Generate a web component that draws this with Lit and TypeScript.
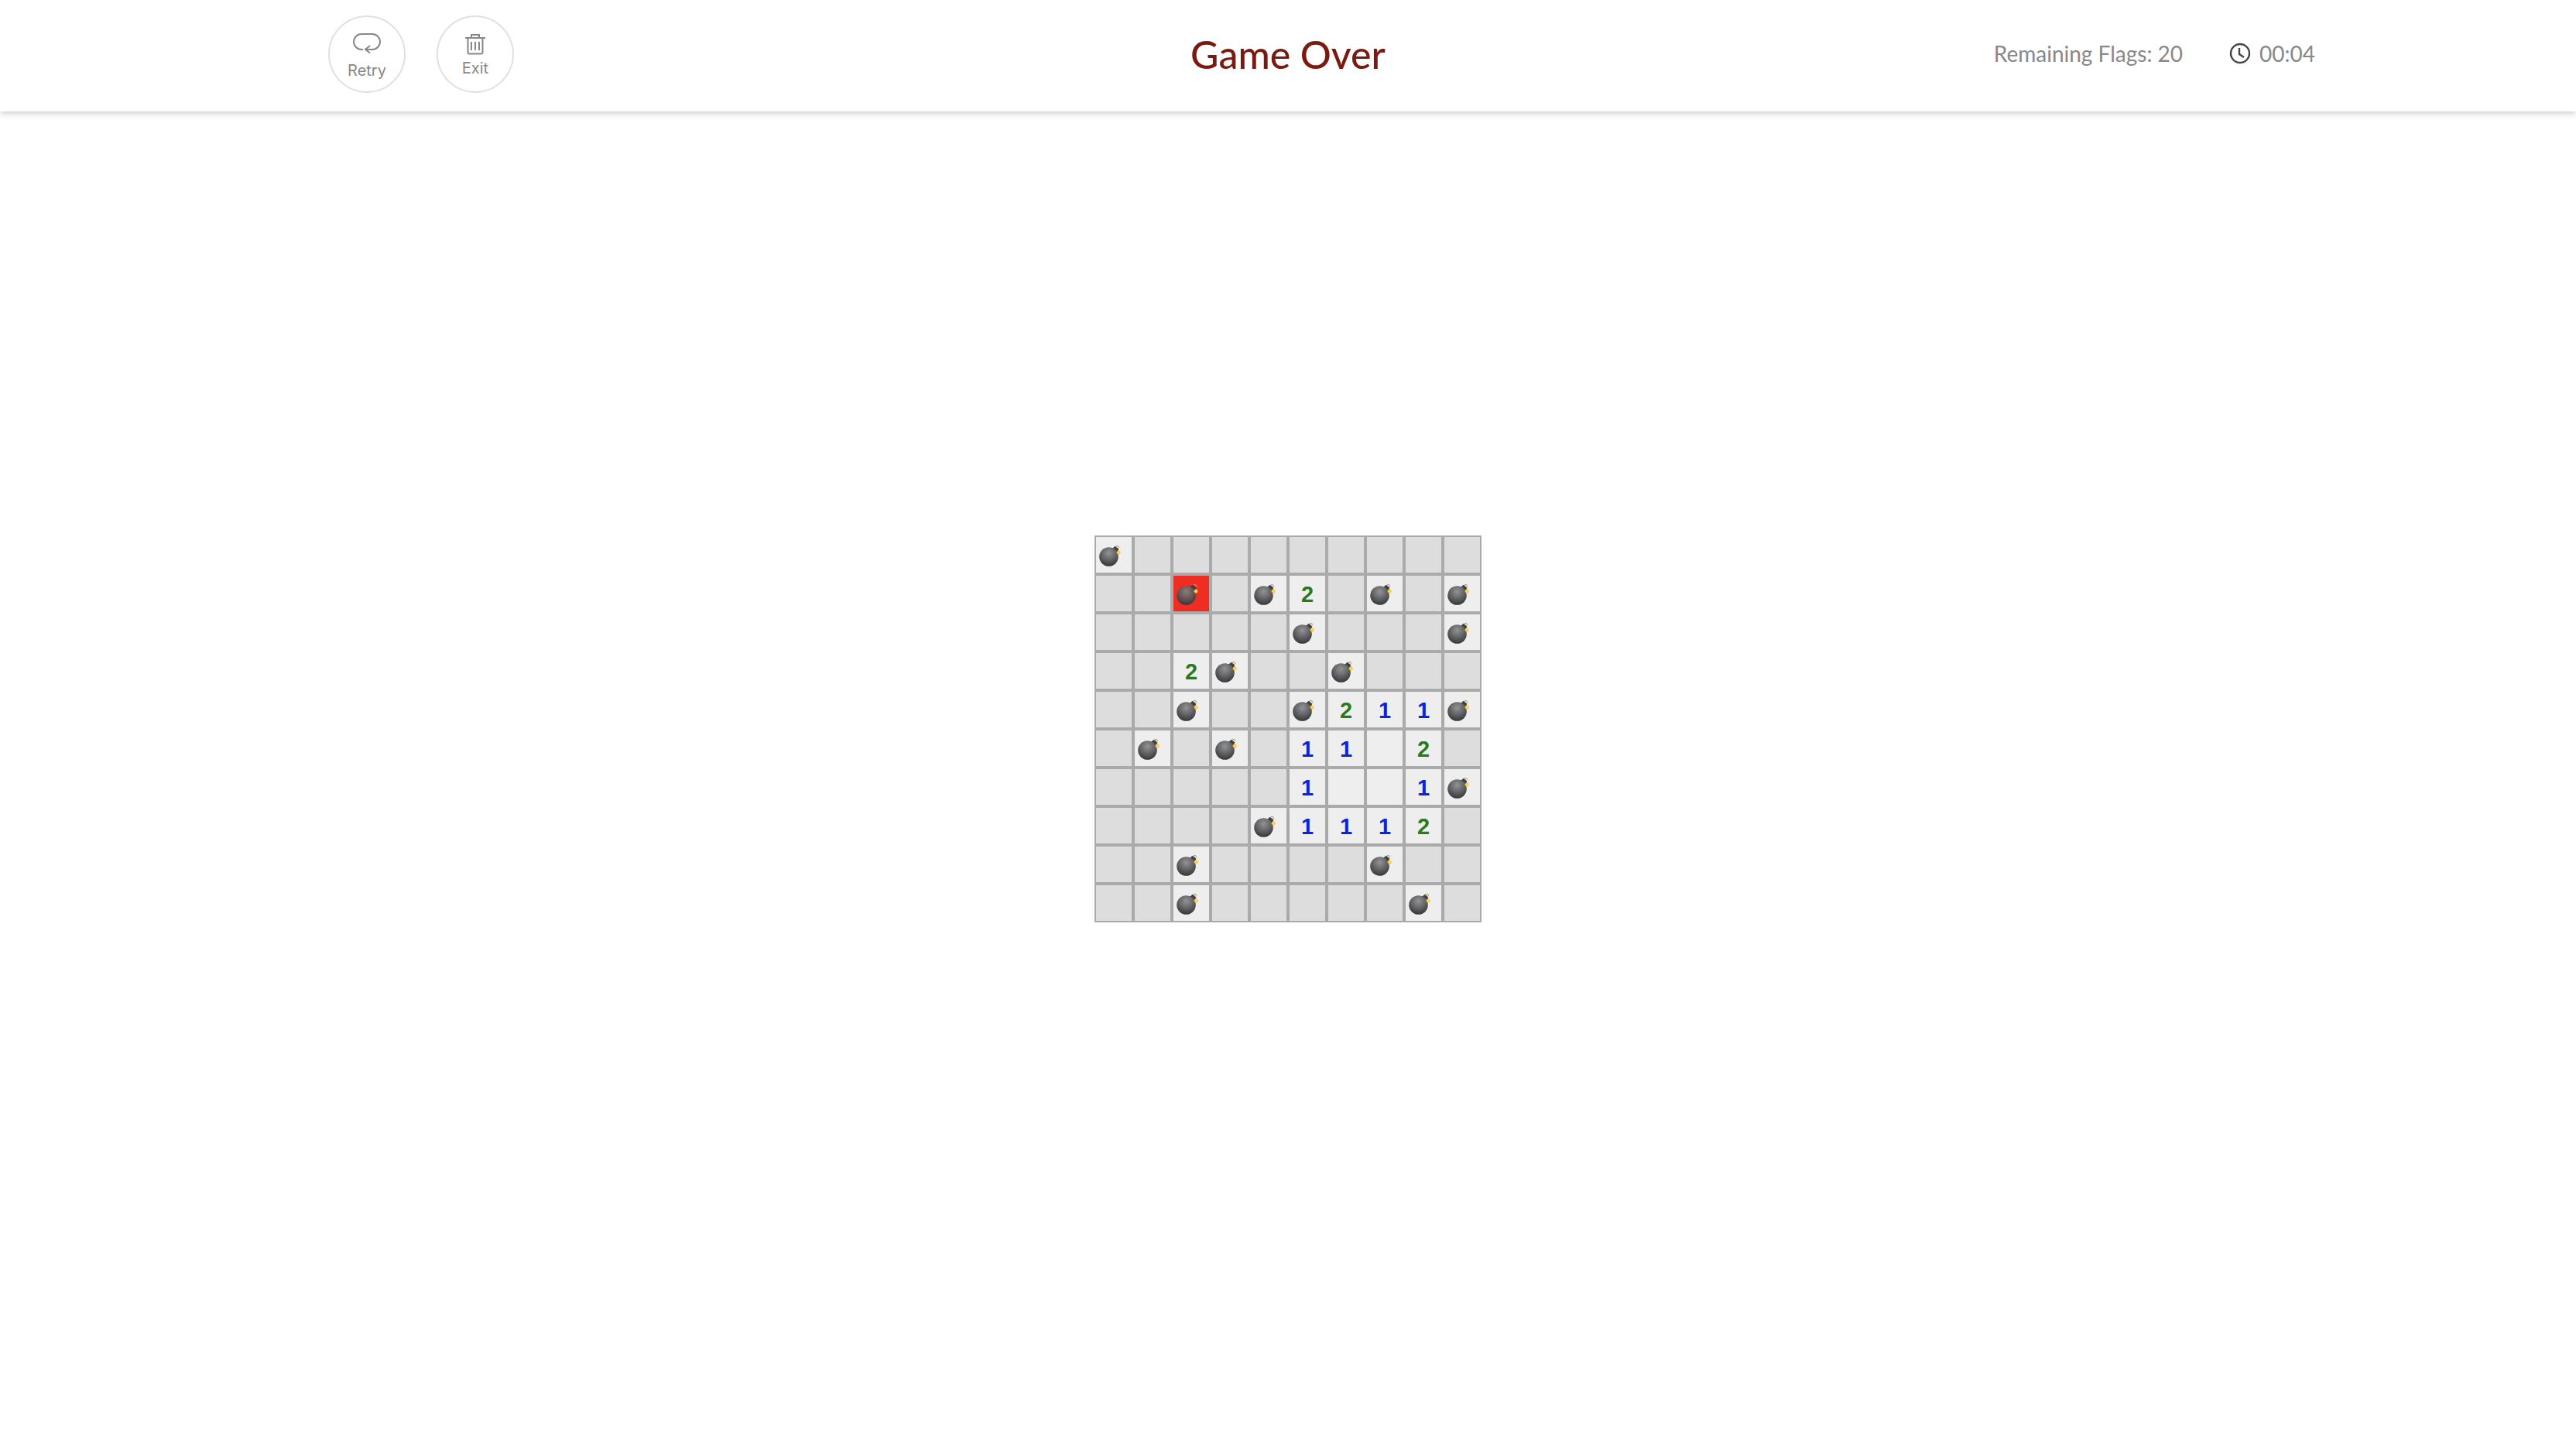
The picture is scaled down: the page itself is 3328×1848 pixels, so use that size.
import { LitElement, css, html, svg } from 'lit';
import { customElement } from 'lit/decorators.js';
import { classMap } from 'lit/directives/class-map.js';

// b = bomb, x = the bomb that went off, . = still covered, _ = opened and empty
const BOARD = [
  'b.........',
  '..x.b2.b.b',
  '.....b...b',
  '..2b..b...',
  '..b..b211b',
  '.b.b.11_2.',
  '.....1__1b',
  '....b1112.',
  '..b....b..',
  '..b.....b.',
];

const bomb = svg`
  <defs>
    <radialGradient id="body" cx="0.5" cy="0.3" r="0.74">
      <stop offset="0" stop-color="#939395" />
      <stop offset="0.5" stop-color="#636467" />
      <stop offset="1" stop-color="#323235" />
    </radialGradient>
    <radialGradient id="spark">
      <stop offset="0" stop-color="#fff07a" />
      <stop offset="0.55" stop-color="#fbc62e" />
      <stop offset="1" stop-color="#f9a01e" stop-opacity="0.15" />
    </radialGradient>
  </defs>
  <path d="M16.500 5.200l4.300-3.400 4.500 3.600-2.400 6.200z" fill="#3f4044" />
  <path d="M22 1.600c1.600-.5 3.200.5 3.800 2.400" fill="none" stroke="#c9a24a" stroke-width="1.200" />
  <circle cx="12.500" cy="15.500" r="12.300" fill="url(#body)" />
  <circle class="glow" cx="12.500" cy="15.500" r="12.300" />
  <circle cx="25" cy="10" r="3" fill="url(#spark)" />
`;

@customElement('mine-cell')
export class MineCell extends LitElement {
  static properties = { value: { type: String, reflect: true } };
  value = '.';

  static styles = css`
    :host {
      display: flex;
      box-sizing: border-box;
      width: 50px;
      height: 50px;
      border: 2px solid #aaa;
      background: #ddd;
      align-items: center;
      justify-content: center;
      font: 700 29px 'Liberation Sans', sans-serif;
      line-height: 1;
    }
    :host([value='b']), :host([value='_']), :host([value='1']), :host([value='2']) {
      background: #eee;
    }
    :host([value='x']) {
      background: #ee2e22;
    }
    .glow { fill: transparent; }
    :host([value='x']) .glow { fill: rgba(120, 40, 30, 0.22); }
    span { padding-top: 2px; }
    .one { color: #0a24dc; }
    .two { color: #2a7a1c; }
    svg {
      width: 28px;
      height: 28px;
      margin: 2px 11px 0 0;
      display: block;
    }
  `;

  render() {
    if (this.value === 'b' || this.value === 'x') {
      return html`<svg viewBox="0 0 28 28">${bomb}</svg>`;
    }
    if (this.value === '1' || this.value === '2') {
      return html`<span class=${classMap({ one: this.value === '1', two: this.value === '2' })}>${this.value}</span>`;
    }
    return html``;
  }
}

@customElement('app-root')
export class AppRoot extends LitElement {
  static styles = css`
    :host {
      display: block;
      width: 100%;
      min-height: 1848px;
      background: #fff;
    }
    header {
      display: grid;
      grid-template-columns: 1fr auto 1fr;
      align-items: center;
      height: 144px;
      box-sizing: border-box;
      padding-bottom: 4px;
      background: #fff;
      box-shadow: 0 2px 9px rgba(0, 0, 0, 0.22);
      font-family: Lato, sans-serif;
    }
    .actions {
      display: flex;
      gap: 40px;
      padding-left: 424px;
    }
    .round {
      display: flex;
      flex-direction: column;
      align-items: center;
      justify-content: center;
      box-sizing: border-box;
      width: 100px;
      height: 100px;
      border: 2px solid #e0e0e0;
      border-radius: 50%;
      background: #fff;
      padding: 3px 0 0;
      color: #888;
      font: 400 20px Inter, sans-serif;
    }
    .round svg {
      display: block;
      fill: none;
      stroke: #888;
      stroke-width: 2;
    }
    .retry svg { width: 36px; height: 28px; margin-bottom: 12px; }
    .exit { padding-bottom: 3px; }
    .exit svg { width: 28px; height: 28px; margin-bottom: 8px; }
    .round span { line-height: 19px; }
    h1 {
      margin: 0;
      font: 500 50px Lato, sans-serif;
      color: #7b1a10;
    }
    .status {
      display: flex;
      justify-content: flex-end;
      align-items: center;
      gap: 60px;
      padding: 0 337px 2px 0;
      color: #888;
      font-size: 28px;
    }
    .clock {
      display: flex;
      align-items: center;
      gap: 11px;
    }
    .clock svg {
      width: 28px;
      height: 28px;
      fill: none;
      stroke: #444;
      stroke-width: 2.400;
    }
    main {
      display: flex;
      justify-content: center;
      padding-top: 548px;
    }
    .board {
      display: grid;
      grid-template-columns: repeat(10, 50px);
    }
  `;

  render() {
    return html`
      <header>
        <div class="actions">
          <button class="round retry">
            <svg viewBox="0 0 36 28">
              <path d="M13 22h-2a10 10 0 0 1 0-20h14a10 10 0 0 1 0 20H16" />
              <path d="M22 17l-6 5 6 4.500" />
            </svg>
            <span>Retry</span>
          </button>
          <button class="round exit">
            <svg viewBox="0 0 28 28">
              <path d="M1 6h26M9 6V2h10v4M4.500 6v19a1.500 1.500 0 0 0 1.500 1.500h16a1.500 1.500 0 0 0 1.500-1.500V6M9 11v11M14 11v11M19 11v11" />
            </svg>
            <span>Exit</span>
          </button>
        </div>
        <h1>Game Over</h1>
        <div class="status">
          <span>Remaining Flags: 20</span>
          <span class="clock">
            <svg viewBox="0 0 28 28">
              <circle cx="14" cy="14" r="12" />
              <path d="M13 7v8l6 4" />
            </svg>
            00:04
          </span>
        </div>
      </header>
      <main>
        <div class="board">
          ${BOARD.flatMap((row) => [...row].map((value) => html`<mine-cell value=${value}></mine-cell>`))}
        </div>
      </main>
    `;
  }
}
